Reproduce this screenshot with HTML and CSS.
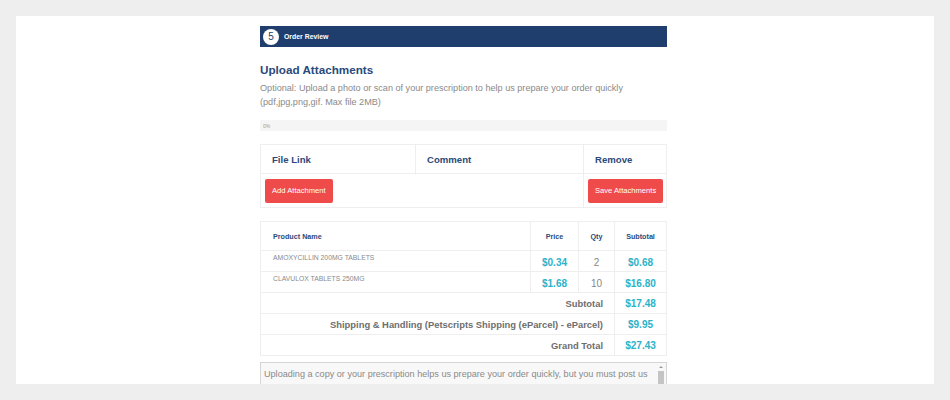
FILE: index.html
```html
<!DOCTYPE html>
<html>
<head>
<meta charset="utf-8">
<link rel="stylesheet" href="styles.css">
</head>
<body>
<div class="panel">
  <div class="col">
    <div class="step">
      <span class="num">5</span>
      <span class="step-title">Order Review</span>
    </div>
    <h2 class="title">Upload Attachments</h2>
    <p class="desc">Optional: Upload a photo or scan of your prescription to help us prepare your order quickly (pdf,jpg,png,gif. Max file 2MB)</p>
    <div class="progress"><span>0%</span></div>

    <table class="attach">
      <tr class="ah">
        <th class="c1">File Link</th>
        <th class="c2">Comment</th>
        <th class="c3">Remove</th>
      </tr>
      <tr class="ab">
        <td colspan="2"><button class="btn">Add Attachment</button></td>
        <td class="c3"><button class="btn">Save Attachments</button></td>
      </tr>
    </table>

    <table class="prod">
      <tr class="ph">
        <th class="pn">Product Name</th>
        <th class="pp">Price</th>
        <th class="pq">Qty</th>
        <th class="ps">Subtotal</th>
      </tr>
      <tr class="pr">
        <td class="name">AMOXYCILLIN 200MG TABLETS</td>
        <td class="money">$0.34</td>
        <td class="qty">2</td>
        <td class="money">$0.68</td>
      </tr>
      <tr class="pr">
        <td class="name">CLAVULOX TABLETS 250MG</td>
        <td class="money">$1.68</td>
        <td class="qty">10</td>
        <td class="money">$16.80</td>
      </tr>
      <tr class="sr">
        <td colspan="3" class="lbl">Subtotal</td>
        <td class="money">$17.48</td>
      </tr>
      <tr class="sr">
        <td colspan="3" class="lbl">Shipping &amp; Handling (Petscripts Shipping (eParcel) - eParcel)</td>
        <td class="money">$9.95</td>
      </tr>
      <tr class="sr">
        <td colspan="3" class="lbl">Grand Total</td>
        <td class="money">$27.43</td>
      </tr>
    </table>

    <div class="note">
      <div class="note-text">Uploading a copy or your prescription helps us prepare your order quickly, but you must post us the original prescription. By placing this order you confirm that you hold a valid prescription for the items ordered.</div>
      <div class="sb"><span class="arr"></span><span class="thumb"></span></div>
    </div>
  </div>
</div>
</body>
</html>
```

FILE: styles.css
```css
html, body {
  margin: 0;
  padding: 0;
  background: #eeeeee;
  overflow: hidden;
}
body {
  padding: 16px 16px 0 16px;
  height: 400px;
  box-sizing: border-box;
  font-family: "Liberation Sans", Arial, sans-serif;
}
.panel {
  background: #fff;
  width: 918px;
  height: 368px;
  overflow: hidden;
  padding: 10px 0 0 244px;
  box-sizing: border-box;
}
.col {
  width: 407px;
}
.step {
  height: 21px;
  background: #1f3e6e;
  display: flex;
  align-items: center;
  padding-left: 3px;
}
.num {
  width: 16px;
  height: 16px;
  border-radius: 50%;
  background: #fff;
  color: #1f3e6e;
  font-size: 10px;
  display: flex;
  align-items: center;
  justify-content: center;
}
.step-title {
  color: #fff;
  font-size: 6.9px;
  font-weight: bold;
  margin-left: 5px;
}
.title {
  margin: 15px 0 0 0;
  font-size: 11.7px;
  line-height: 16px;
  color: #2b4a7b;
  font-weight: bold;
}
.desc {
  margin: 3px 0 0 0;
  font-size: 9.1px;
  line-height: 14px;
  color: #8a8a8a;
}
.progress {
  margin-top: 11px;
  height: 11px;
  background: #f5f5f5;
  display: flex;
  align-items: center;
  padding-left: 3px;
}
.progress span {
  font-size: 5px;
  color: #999;
}
table {
  border-collapse: collapse;
  width: 407px;
}
.attach {
  margin-top: 13px;
}
.attach th, .attach td {
  border: 1px solid #eee;
  padding: 0;
}
.attach th {
  height: 28px;
  text-align: left;
  font-size: 9.6px;
  color: #2b4a7b;
  font-weight: bold;
  padding-left: 11px;
}
.attach .c1 { width: 143px; }
.attach .c2 { width: 156px; }
.attach td {
  height: 33px;
  padding-left: 4px;
}
.btn {
  background: #ef4b4b;
  color: #fff;
  border: none;
  border-radius: 2px;
  font-family: "Liberation Sans", Arial, sans-serif;
  font-size: 7.6px;
  height: 24px;
  padding: 0 7px;
  display: block;
}
.prod {
  margin-top: 13px;
}
.prod th, .prod td {
  border: 1px solid #eee;
  padding: 0;
}
.prod th {
  height: 28px;
  font-size: 7.2px;
  color: #2b4a7b;
  font-weight: bold;
}
.prod .pn { text-align: left; padding-left: 12px; width: 257px; }
.prod .pp { width: 47px; }
.prod .pq { width: 35px; }
.pr td {
  height: 17px;
  box-sizing: content-box;
}
.name {
  font-size: 6.8px;
  color: #8a8a8a;
  text-align: left;
  padding-left: 12px !important;
  vertical-align: top;
  padding-top: 3px !important;
}
.money {
  color: #2ab3c9;
  font-weight: bold;
  font-size: 10px;
  text-align: center;
  padding-top: 3px !important;
}
.qty {
  color: #888;
  font-size: 10px;
  text-align: center;
  padding-top: 3px !important;
}
.sr td {
  height: 20px;
}
.sr .money {
  padding-top: 0 !important;
}
.lbl {
  text-align: right;
  font-size: 9.4px;
  font-weight: bold;
  color: #6e6e6e;
  padding-right: 11px !important;
}
.note {
  margin-top: 6px;
  border: 1px solid #d5d5d5;
  background: #f8f8f8;
  height: 40px;
  display: flex;
  overflow: hidden;
}
.note-text {
  flex: 1;
  font-size: 9.1px;
  line-height: 17px;
  color: #8a8a8a;
  padding: 3px 8px 0 3px;
}
.sb {
  width: 10px;
  display: flex;
  flex-direction: column;
  align-items: center;
  padding-top: 3px;
}
.arr {
  width: 0;
  height: 0;
  border-left: 2px solid transparent;
  border-right: 2px solid transparent;
  border-bottom: 2px solid #999;
}
.thumb {
  margin-top: 3px;
  width: 6px;
  height: 14px;
  background: #c4c4c4;
}
```
